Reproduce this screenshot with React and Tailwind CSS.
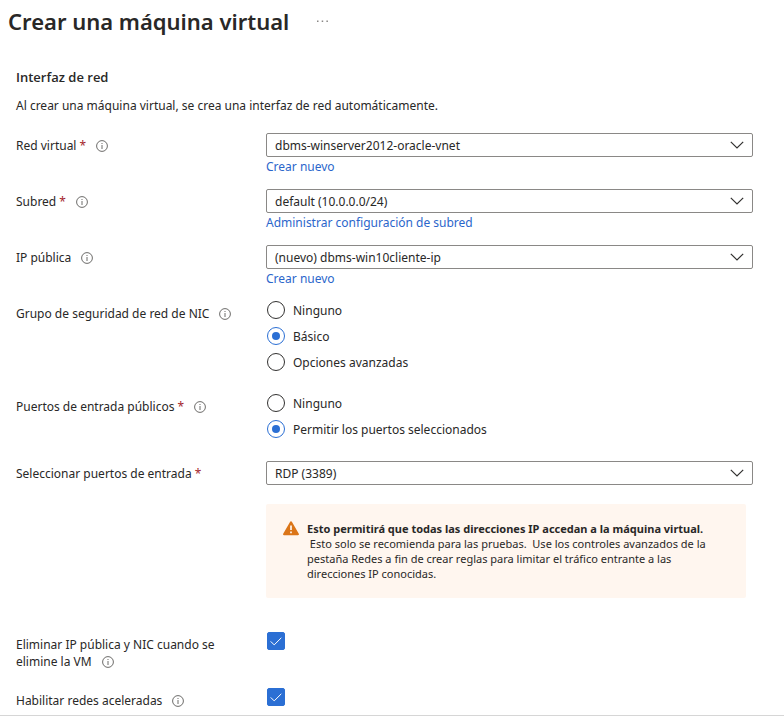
import { useState } from "react";

function InfoIcon() {
  return (
    <svg viewBox="0 0 12 12" className="ml-[10px] inline-block size-3 shrink-0 align-[-2px]" fill="none" role="img" aria-label="Información">
      <circle cx="6" cy="6" r="5.4" stroke="#5c5b59" strokeWidth="0.9" />
      <path d="M6 5v4" stroke="#5c5b59" strokeWidth="0.9" />
      <circle cx="6" cy="3.5" r="0.6" fill="#5c5b59" />
    </svg>
  );
}

function Required() {
  return <span className="text-[#a4262c]"> *</span>;
}

function Chevron() {
  return (
    <svg viewBox="0 0 14 8" className="pointer-events-none col-start-1 row-start-1 mr-[9px] h-2 w-[14px] justify-self-end" fill="none" aria-hidden="true">
      <path d="M0.8 0.8 7 7l6.2-6.2" stroke="#323130" strokeWidth="1.2" />
    </svg>
  );
}

function SelectRow({ id, label, required, info, value, link }) {
  return (
    <div className="grid grid-cols-[250px_1fr]">
      <label htmlFor={id} className="flex h-[26px] items-center whitespace-pre">
        <span>
          {label}
          {required && <Required />}
        </span>
        {info && <InfoIcon />}
      </label>
      <div>
        <div className="grid items-center">
          <select
            id={id}
            className="col-start-1 row-start-1 h-6 w-full appearance-none rounded-[2px] border border-[#8a8886] bg-white px-2 pt-px text-[#292827]"
          >
            <option>{value}</option>
          </select>
          <Chevron />
        </div>
        {link && (
          <a href="#" className="block h-[18px] leading-5 text-[#2b66cb]">
            {link}
          </a>
        )}
      </div>
    </div>
  );
}

function RadioRow({ name, label, required, options, initial }) {
  const [value, setValue] = useState(initial);
  return (
    <fieldset className="grid grid-cols-[250px_1fr]">
      <div className="flex h-[26px] items-center whitespace-pre">
        <span id={name}>
          {label}
          {required && <Required />}
        </span>
        <InfoIcon />
      </div>
      <div role="radiogroup" aria-labelledby={name} className="flex flex-col gap-2 pl-px">
        {options.map((option) => (
          <label key={option} className="flex h-[18px] items-center gap-2 leading-5">
            <input
              type="radio"
              name={name}
              checked={value === option}
              onChange={() => setValue(option)}
              className="grid size-[18px] shrink-0 appearance-none place-items-center rounded-full border border-[#323130] bg-white before:size-2 before:rounded-full checked:border-[#2b6fd4] checked:before:bg-[#2b6fd4]"
            />
            <span className="pt-px">{option}</span>
          </label>
        ))}
      </div>
    </fieldset>
  );
}

function CheckRow({ id, label }) {
  return (
    <div className="grid grid-cols-[250px_1fr]">
      <label htmlFor={id} className="pt-1 pr-6 leading-[17px]">
        {label}
        <InfoIcon />
      </label>
      <div className="ml-px grid size-[18px] place-items-center">
        <input
          id={id}
          type="checkbox"
          defaultChecked
          className="peer col-start-1 row-start-1 size-[18px] appearance-none rounded-[2px] border border-[#323130] checked:border-[#2b6fd4] checked:bg-[#2b6fd4]"
        />
        <svg viewBox="0 0 12 9" className="pointer-events-none invisible col-start-1 row-start-1 h-[9px] w-3 peer-checked:visible" fill="none" aria-hidden="true">
          <path d="M0.7 4.4 4.2 7.9 11.3 0.8" stroke="#fff" strokeWidth="1" />
        </svg>
      </div>
    </div>
  );
}

export default function App() {
  return (
    <main className="border-b border-[#d6d6d6] bg-white pb-[6px] font-['Noto_Sans','Open_Sans',sans-serif] text-[12px] text-[#292827]">
      <header className="flex h-[42px] items-center gap-7 pl-2">
        <h1 className="text-[22px] font-semibold">Crear una máquina virtual</h1>
        <button type="button" aria-label="Más opciones">
          <svg viewBox="0 0 11 2" className="h-[2px] w-[11px]" fill="#8a8886" aria-hidden="true">
            <path d="M0 0.5h1.5v1.5H0zM4.7 0.5h1.5v1.5H4.7zM9.4 0.5h1.5v1.5H9.4z" />
          </svg>
        </button>
      </header>

      <form className="pt-[25px] pr-[31px] pl-4">
        <h2 className="font-['Open_Sans','Noto_Sans',sans-serif] text-[13px] leading-5 font-semibold">Interfaz de red</h2>
        <p className="mt-[9px] leading-5">Al crear una máquina virtual, se crea una interfaz de red automáticamente.</p>

        <div className="mt-[17px] flex flex-col gap-[14px]">
          <SelectRow id="vnet" label="Red virtual" required info value="dbms-winserver2012-oracle-vnet" link="Crear nuevo" />
          <SelectRow id="subnet" label="Subred" required info value="default (10.0.0.0/24)" link="Administrar configuración de subred" />
          <SelectRow id="public-ip" label="IP pública" info value="(nuevo) dbms-win10cliente-ip" link="Crear nuevo" />
        </div>

        <div className="mt-[14px] flex flex-col gap-[23px]">
          <RadioRow
            name="nsg"
            label="Grupo de seguridad de red de NIC"
            options={["Ninguno", "Básico", "Opciones avanzadas"]}
            initial="Básico"
          />
          <RadioRow
            name="inbound"
            label="Puertos de entrada públicos"
            required
            options={["Ninguno", "Permitir los puertos seleccionados"]}
            initial="Permitir los puertos seleccionados"
          />
          <SelectRow id="ports" label="Seleccionar puertos de entrada" required value="RDP (3389)" />
        </div>

        <div role="alert" className="mt-[17px] mr-[7px] ml-[250px] flex gap-2 rounded-[2px] bg-[#fff6ef] px-[17px] py-[17px] text-[11px] leading-[15px]">
          <svg viewBox="0 0 16 15" className="h-[15px] w-4 shrink-0" aria-hidden="true">
            <path d="M8 0.3c.5 0 .8.2 1 .6l6.8 11.8c.4.8 0 1.5-.9 1.5H1.1c-.9 0-1.3-.7-.9-1.5L7 .9c.2-.4.5-.6 1-.6z" fill="#db7518" />
            <path d="M8 4.5v4.6M8 10.5v1.7" stroke="#fff" strokeWidth="1.6" />
          </svg>
          <p>
            <strong className="block font-bold">Esto permitirá que todas las direcciones IP accedan a la máquina virtual.</strong>
            &nbsp;Esto solo se recomienda para las pruebas.&nbsp; Use los controles avanzados de la pestaña Redes a fin de crear reglas para limitar el tráfico entrante a las direcciones IP conocidas.
          </p>
        </div>

        <div className="mt-[34px] flex flex-col gap-[18px]">
          <CheckRow id="delete-ip" label="Eliminar IP pública y NIC cuando se elimine la VM" />
          <CheckRow id="accelerated" label="Habilitar redes aceleradas" />
        </div>
      </form>
    </main>
  );
}
